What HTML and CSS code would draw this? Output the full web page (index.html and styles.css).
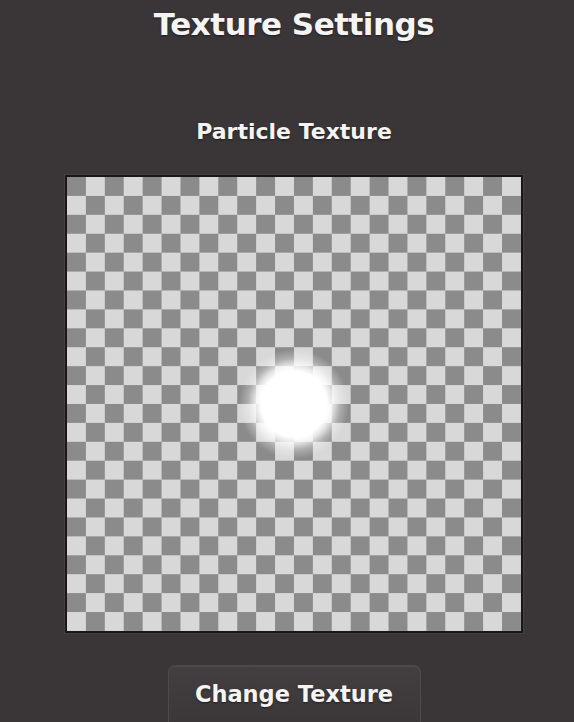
FILE: index.html
```html
<!DOCTYPE html>
<html>
<head>
<meta charset="utf-8">
<link rel="stylesheet" href="styles.css">
</head>
<body>
<div class="panel">
  <h1 class="title">Texture Settings</h1>
  <h2 class="label">Particle Texture</h2>
  <div class="preview">
    <div class="glow"></div>
  </div>
  <button class="btn">Change Texture</button>
</div>
</body>
</html>
```
FILE: styles.css
```css
html, body {
  margin: 0;
  padding: 0;
  background: #3a3637;
  height: 100%;
  overflow: hidden;
}
.panel {
  display: flex;
  flex-direction: column;
  align-items: center;
  padding-left: 14px;
  font-family: "DejaVu Sans", "Liberation Sans", sans-serif;
  color: #f4f4f4;
}
.title {
  margin: 0;
  padding-top: 6px;
  font-size: 31px;
  line-height: 36px;
  font-weight: bold;
  letter-spacing: -0.5px;
  text-shadow: 0 1px 2px rgba(0,0,0,0.5);
}
.label {
  margin: 0;
  margin-top: 77px;
  font-size: 22px;
  line-height: 26px;
  font-weight: bold;
  text-shadow: 0 1px 2px rgba(0,0,0,0.5);
}
.preview {
  position: relative;
  margin-top: 30px;
  width: 454px;
  height: 454px;
  border: 2px solid #191718;
  box-shadow: 0 0 0 1px rgba(255,255,255,0.06);
  background-color: #d8d8d8;
  background-image: conic-gradient(#8b8b8b 0 25%, #d8d8d8 0 50%, #8b8b8b 0 75%, #d8d8d8 0);
  background-size: 37.833px 37.833px;
  background-position: 18.917px 0;
}
.glow {
  position: absolute;
  left: 50%;
  top: 50%;
  width: 110px;
  height: 110px;
  margin: -55px 0 0 -55px;
  border-radius: 50%;
  background: radial-gradient(circle, #ffffff 0, #ffffff 33px, rgba(255,255,255,0.75) 39px, rgba(255,255,255,0.3) 46px, rgba(255,255,255,0) 55px);
}
.btn {
  margin-top: 32px;
  width: 253px;
  height: 64px;
  padding: 0 0 6px;
  border: 1px solid #4e4a4b;
  border-radius: 7px;
  background: linear-gradient(#433f40, #3b3738);
  box-shadow: inset 0 1px 0 rgba(255,255,255,0.06);
  font-family: "DejaVu Sans", "Liberation Sans", sans-serif;
  font-size: 22.5px;
  font-weight: bold;
  color: #f4f4f4;
  text-shadow: 0 1px 2px rgba(0,0,0,0.5);
}
```
